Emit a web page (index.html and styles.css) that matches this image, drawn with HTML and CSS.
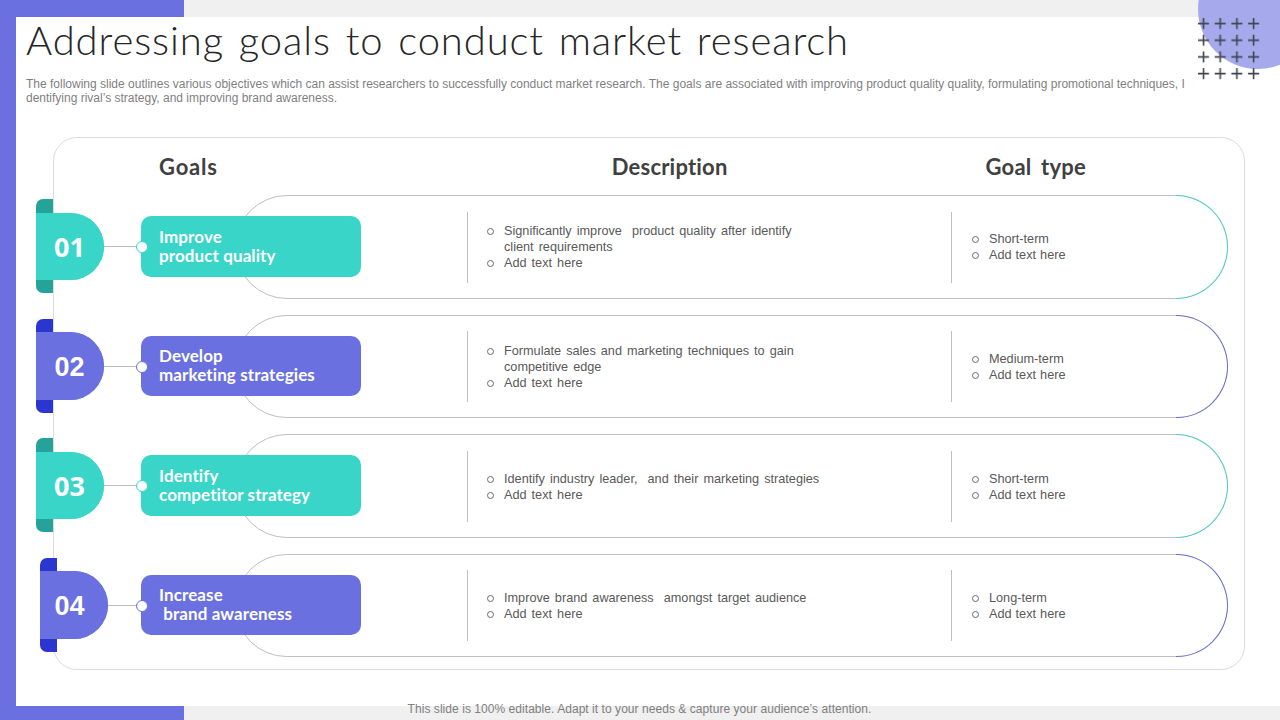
FILE: index.html
```html
<!DOCTYPE html>
<html lang="en">
<head>
<meta charset="utf-8">
<title>Addressing goals to conduct market research</title>
<link rel="stylesheet" href="styles.css">
</head>
<body>
<div class="page">
  <main class="panel">
    <div class="deco" aria-hidden="true">
      <svg width="70" height="70" viewBox="0 0 70 70">
        <defs>
          <pattern id="plus" x="0" y="0" width="16.7" height="16.7" patternUnits="userSpaceOnUse">
            <path d="M0 5.5H11M5.5 0V11" stroke="#3f4550" stroke-width="1.6" fill="none"/>
          </pattern>
        </defs>
        <rect width="64" height="64" fill="url(#plus)"/>
      </svg>
    </div>
    <h1 class="title">Addressing goals to conduct market research</h1>
    <p class="intro">The following slide outlines various objectives which can assist researchers to successfully conduct market research. The goals are associated with improving product quality quality, formulating promotional techniques, I<br>dentifying rival’s strategy, and improving brand awareness.</p>

    <section class="card">
      <div class="heads">
        <span class="head head-goals">Goals</span>
        <span class="head head-desc">Description</span>
        <span class="head head-type">Goal type</span>
      </div>

      <div class="row teal tall">
        <div class="tab"><span class="tab-cap"></span><span class="num">01</span></div>
        <div class="link"></div>
        <div class="label">Improve<br>product quality</div>
        <div class="pill">
          <span class="arc"></span>
          <ul class="col col-desc">
            <li>Significantly improve&nbsp; product quality after identify client requirements</li>
            <li>Add text here</li>
          </ul>
          <ul class="col col-type">
            <li>Short-term</li>
            <li>Add text here</li>
          </ul>
        </div>
      </div>

      <div class="row violet">
        <div class="tab"><span class="tab-cap"></span><span class="num">02</span></div>
        <div class="link"></div>
        <div class="label">Develop<br>marketing strategies</div>
        <div class="pill">
          <span class="arc"></span>
          <ul class="col col-desc">
            <li>Formulate sales and marketing techniques to gain competitive edge</li>
            <li>Add text here</li>
          </ul>
          <ul class="col col-type">
            <li>Medium-term</li>
            <li>Add text here</li>
          </ul>
        </div>
      </div>

      <div class="row teal tall third">
        <div class="tab"><span class="tab-cap"></span><span class="num">03</span></div>
        <div class="link"></div>
        <div class="label">Identify<br>competitor strategy</div>
        <div class="pill">
          <span class="arc"></span>
          <ul class="col col-desc">
            <li>Identify industry leader,&nbsp; and their marketing strategies</li>
            <li>Add text here</li>
          </ul>
          <ul class="col col-type">
            <li>Short-term</li>
            <li>Add text here</li>
          </ul>
        </div>
      </div>

      <div class="row violet shifted">
        <div class="tab"><span class="tab-cap"></span><span class="num">04</span></div>
        <div class="link"></div>
        <div class="label">Increase<br>&nbsp;brand awareness</div>
        <div class="pill">
          <span class="arc"></span>
          <ul class="col col-desc">
            <li>Improve brand awareness&nbsp; amongst target audience</li>
            <li>Add text here</li>
          </ul>
          <ul class="col col-type">
            <li>Long-term</li>
            <li>Add text here</li>
          </ul>
        </div>
      </div>
    </section>
  </main>
  <footer class="foot">This slide is 100% editable. Adapt it to your needs &amp; capture your audience’s attention.</footer>
</div>
</body>
</html>
```

FILE: styles.css
```css
* { box-sizing: border-box; }
html, body { margin: 0; height: 100%; }
body { overflow: hidden; font-family: "Liberation Sans", Arial, sans-serif; }

.page {
  width: 1280px;
  height: 720px;
  overflow: hidden;
  padding: 17px 0 0 16px;
  background: linear-gradient(to right, #6a70e0 184px, #f0f0f0 184px);
}
.panel {
  position: relative;
  height: 689px;
  background: #fff;
  padding: 0 0 0 10px;
}
.deco {
  position: absolute;
  left: 1182px;
  top: 1px;
  width: 70px;
  height: 70px;
}
.deco::before {
  content: "";
  position: absolute;
  left: 0;
  top: -69px;
  width: 120px;
  height: 120px;
  border-radius: 50%;
  background: #a6aaec;
}
.deco svg { position: absolute; left: 0; top: 0; }

.title {
  margin: 0;
  font-family: Lato, sans-serif;
  font-weight: 300;
  font-size: 40px;
  line-height: 46px;
  color: #262626;
  letter-spacing: 0.9px;
  word-spacing: 3px;
  white-space: nowrap;
}
.intro {
  margin: 14px 0 0;
  font-size: 12px;
  line-height: 14px;
  color: #7f7f7f;
  white-space: nowrap;
}

.card {
  margin: 32px 0 0 27px;
  width: 1192px;
  height: 533px;
  border: 1px solid #dcdcdc;
  border-radius: 24px;
  padding: 0 16px 0 0;
}
.heads {
  display: flex;
  height: 57px;
  align-items: center;
}
.head {
  font-family: Lato, sans-serif;
  font-size: 22px;
  font-weight: 700;
  color: #404040;
  letter-spacing: 0.2px;
  word-spacing: 4px;
}
.head-goals { margin-left: 105px; letter-spacing: 0.8px; }
.head-desc { margin-left: 394px; }
.head-type { margin-left: 258px; }

.row {
  display: flex;
  align-items: center;
  height: 103px;
  margin: 0 0 16px -18px;
}
.row.tall { height: 104px; }
.row:last-child { margin-bottom: 0; }
.teal { --fill: #3ad5c9; --dark: #25a39b; --arc: #52cdc3; }
.violet { --fill: #6a70e0; --dark: #2a36cf; --arc: #6a70c8; }

.tab, .link, .label { margin-bottom: 2px; }
.violet .tab, .violet .link, .violet .label { margin-bottom: 1px; }

.tab {
  position: relative;
  flex: none;
  width: 68px;
  height: 67px;
  border-radius: 0 34px 34px 0;
  background: var(--fill);
  display: flex;
  align-items: center;
  justify-content: center;
  padding-right: 1px;
}
.violet .tab { height: 68px; padding-top: 2px; }
.tab-cap {
  position: absolute;
  left: 0;
  top: -14px;
  bottom: -13px;
  width: 17px;
  border-radius: 7px 0 0 7px;
  background: var(--dark);
}
.violet .tab-cap { top: -13px; }
.tab::after {
  content: "";
  position: absolute;
  inset: 0;
  border-radius: 0 34px 34px 0;
  background: var(--fill);
}
.num {
  position: relative;
  z-index: 1;
  font-family: "Open Sans", sans-serif;
  font-weight: 700;
  font-size: 27px;
  color: #fff;
}
.violet .num { font-family: "Liberation Sans", Arial, sans-serif; }
.link {
  position: relative;
  flex: none;
  width: 37px;
  height: 1px;
  background: #bdbdbd;
}
.link::after {
  content: "";
  position: absolute;
  right: -7px;
  top: -5px;
  width: 10px;
  height: 10px;
  border-radius: 50%;
  background: #fff;
  border: 1px solid var(--fill);
  z-index: 3;
}
.shifted .tab { margin-left: 4px; padding-right: 9px; }
.shifted .link { width: 33px; }

.label {
  position: relative;
  z-index: 2;
  flex: none;
  width: 220px;
  height: 61px;
  padding: 11px 0 0 18px;
  border-radius: 10px;
  background: var(--fill);
  color: #fff;
  font-family: Lato, sans-serif;
  font-weight: 700;
  font-size: 17px;
  line-height: 19px;
  letter-spacing: 0.1px;
  white-space: nowrap;
}
.violet .label { height: 60px; padding-top: 10px; }

.pill {
  position: relative;
  flex: none;
  display: flex;
  align-items: center;
  width: 993px;
  height: 100%;
  margin-left: -126px;
  border: 1px solid #bfbfbf;
  border-radius: 52px;
  padding-left: 231px;
}
.arc {
  position: absolute;
  right: -1px;
  top: -1px;
  bottom: -1px;
  width: 52px;
  border: 1px solid var(--arc);
  border-left: 0;
  border-radius: 0 52px 52px 0;
  background: #fff;
}
.col {
  position: relative;
  margin: 0;
  height: 71px;
  list-style: none;
  border-left: 1px solid #bfbfbf;
  display: flex;
  flex-direction: column;
  justify-content: center;
  font-size: 12.7px;
  line-height: 16px;
  color: #595959;
}
.third .col { padding-top: 2px; }
.col li { position: relative; }
.col li::before {
  content: "";
  position: absolute;
  left: -17px;
  top: 5px;
  width: 5px;
  height: 5px;
  border: 1px solid #6b6b6b;
  border-radius: 50%;
}
.col-desc { width: 484px; padding: 0 129px 0 36px; word-spacing: 1.5px; }
.col-type { width: 200px; padding: 0 0 0 37px; word-spacing: 0.5px; }

.foot {
  margin-top: -4px;
  position: relative;
  text-align: center;
  padding-right: 17px;
  font-size: 12px;
  line-height: 14px;
  color: #7f7f7f;
  letter-spacing: 0.05px;
}
```
